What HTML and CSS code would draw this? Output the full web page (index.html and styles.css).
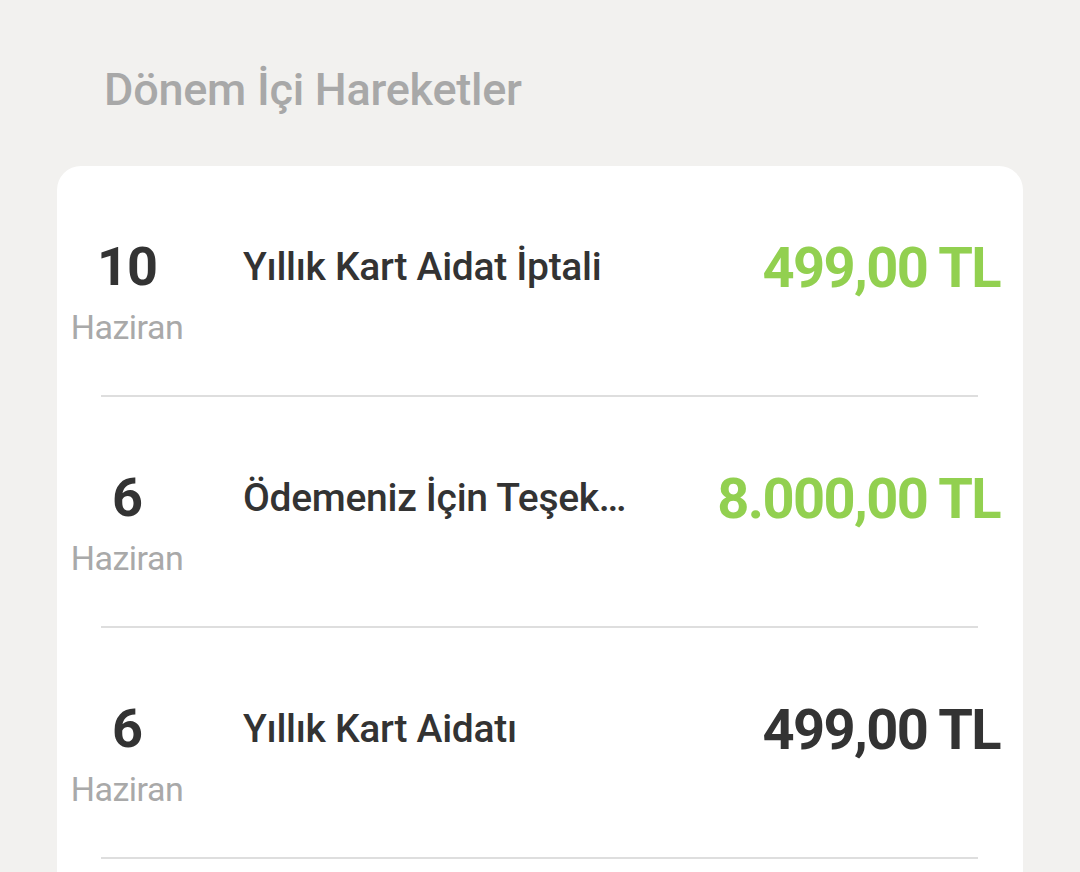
FILE: index.html
```html
<!DOCTYPE html>
<html lang="tr">
<head>
  <meta charset="UTF-8">
  <meta name="viewport" content="width=device-width, initial-scale=1.0">
  <title>Dönem İçi Hareketler</title>
  <link rel="stylesheet" href="styles.css">
</head>
<body>
  <div class="page">
    <h1 class="section-title">Dönem İçi Hareketler</h1>

    <!-- Transactions list -->
    <div class="card">
      <div class="tx">
        <div class="tx-date">
          <div class="day">10</div>
          <div class="month">Haziran</div>
        </div>
        <div class="tx-desc">Yıllık Kart Aidat İptali</div>
        <div class="tx-amount credit">499,00 TL</div>
      </div>
      <div class="divider"></div>

      <div class="tx">
        <div class="tx-date">
          <div class="day">6</div>
          <div class="month">Haziran</div>
        </div>
        <div class="tx-desc">Ödemeniz İçin Teşekkürler</div>
        <div class="tx-amount credit">8.000,00 TL</div>
      </div>
      <div class="divider"></div>

      <div class="tx">
        <div class="tx-date">
          <div class="day">6</div>
          <div class="month">Haziran</div>
        </div>
        <div class="tx-desc">Yıllık Kart Aidatı</div>
        <div class="tx-amount">499,00 TL</div>
      </div>
      <div class="divider"></div>
    </div>
  </div>
</body>
</html>
```

FILE: styles.css
```css
* {
  margin: 0;
  padding: 0;
  box-sizing: border-box;
}

html, body {
  height: 100%;
  overflow: hidden;
}

body {
  font-family: Roboto, 'Noto Sans', sans-serif;
  background-color: #f2f1ef;
  color: #333;
}

.page {
  padding: 0 57px;
}

.section-title {
  font-size: 45px;
  font-weight: 500;
  line-height: 52px;
  color: #a8a8a8;
  padding: 64px 0 0 47px;
  height: 166px;
  letter-spacing: -0.25px;
}

.card {
  background-color: #fff;
  border-radius: 24px 24px 0 0;
  padding: 0 23px 0 13px;
  height: 706px;
}

.tx {
  display: flex;
  align-items: flex-start;
  height: 229px;
  padding-top: 71px;
}

.tx-date {
  width: 114px;
  text-align: center;
  flex-shrink: 0;
}

.day {
  font-size: 54px;
  font-weight: 700;
  line-height: 60px;
  color: #333;
  letter-spacing: -1px;
}

.month {
  font-size: 34px;
  line-height: 40px;
  margin-top: 10px;
  color: #a9a9a9;
  letter-spacing: -0.5px;
}

.tx-desc {
  margin: 2px 0 0 59px;
  width: 395px;
  font-size: 39px;
  font-weight: 500;
  line-height: 56px;
  color: #333;
  white-space: nowrap;
  overflow: hidden;
  text-overflow: ellipsis;
  letter-spacing: -0.3px;
}

.tx-amount {
  margin: 1px 0 0 auto;
  font-size: 56px;
  font-weight: 700;
  line-height: 60px;
  letter-spacing: -1.6px;
  color: #333;
  white-space: nowrap;
}

.tx-amount.credit {
  color: #92d050;
}

.divider {
  height: 2px;
  background-color: #dedede;
  margin: 0 22px 0 31px;
}
```
